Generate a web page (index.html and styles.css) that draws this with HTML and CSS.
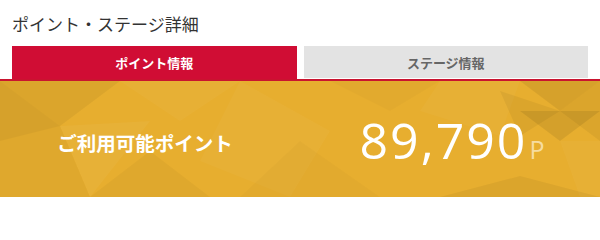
FILE: index.html
```html
<!DOCTYPE html>
<html lang="ja">
<head>
<meta charset="utf-8">
<link rel="stylesheet" href="styles.css">
</head>
<body>
<h1 class="title">ポイント・ステージ詳細</h1>
<div class="tabs">
  <div class="tab tab-active">ポイント情報</div>
  <div class="tab tab-idle">ステージ情報</div>
</div>
<section class="band">
  <svg class="band-bg" viewBox="0 0 600 116" preserveAspectRatio="none" aria-hidden="true">
    <polygon points="0,0 120,0 60,45" fill="#000" opacity="0.05"/>
    <polygon points="0,0 60,45 0,60" fill="#000" opacity="0.07"/>
    <polygon points="0,60 60,45 90,116 0,116" fill="#000" opacity="0.03"/>
    <polygon points="60,45 150,40 90,116" fill="#fff" opacity="0.04"/>
    <polygon points="120,0 240,0 180,40" fill="#fff" opacity="0.03"/>
    <polygon points="90,116 150,70 210,116" fill="#000" opacity="0.03"/>
    <polygon points="240,0 330,50 290,116 200,80" fill="#fff" opacity="0.03"/>
    <polygon points="330,0 440,0 390,30" fill="#000" opacity="0.02"/>
    <polygon points="440,0 520,0 500,55 420,30" fill="#fff" opacity="0.03"/>
    <polygon points="520,0 600,0 560,30" fill="#000" opacity="0.07"/>
    <polygon points="500,10 560,30 520,55" fill="#000" opacity="0.05"/>
    <polygon points="600,0 600,60 560,30" fill="#000" opacity="0.05"/>
    <polygon points="520,30 600,30 560,60" fill="#000" opacity="0.08"/>
    <polygon points="560,60 600,60 600,116 580,116" fill="#fff" opacity="0.03"/>
    <polygon points="440,116 520,95 600,116" fill="#000" opacity="0.05"/>
    <polygon points="300,60 380,116 240,116" fill="#000" opacity="0.02"/>
  </svg>
  <div class="band-label">ご利用可能ポイント</div>
  <div class="band-value"><span class="num">89,790</span><span class="unit">P</span></div>
</section>
</body>
</html>
```

FILE: styles.css
```css
* { box-sizing: border-box; }
html, body { margin: 0; padding: 0; background: #fff; }
body {
  width: 600px;
  font-family: "Noto Sans CJK JP", "Noto Sans", sans-serif;
  color: #333;
}
.title {
  margin: 0;
  padding: 12px 12px 0;
  height: 46px;
  font-size: 17px;
  line-height: 24px;
  font-weight: 400;
  color: #333;
}
.tabs {
  display: flex;
  align-items: flex-start;
  gap: 7px;
  padding: 0 12px;
  border-bottom: 2px solid #c9142f;
}
.tab {
  flex: 1;
  display: flex;
  align-items: center;
  justify-content: center;
  font-size: 13px;
  font-weight: 700;
}
.tab-active {
  height: 33px;
  background: #d00d34;
  color: #fff;
}
.tab-idle {
  height: 32px;
  background: #e3e3e3;
  color: #666;
}
.band {
  position: relative;
  height: 116px;
  background: #e7ae2f;
  display: grid;
  grid-template-columns: 1fr 1fr;
  align-items: center;
  overflow: hidden;
}
.band-bg {
  position: absolute;
  inset: 0;
  width: 100%;
  height: 100%;
}
.band-label {
  position: relative;
  text-align: center;
  padding-right: 10px;
  padding-top: 6px;
  color: #fff;
  font-size: 19.5px;
  font-weight: 700;
}
.band-value {
  position: relative;
  display: flex;
  align-items: baseline;
  justify-content: center;
  padding-left: 4px;
  padding-top: 2px;
  color: #fff;
  font-family: "Open Sans", "Noto Sans", sans-serif;
}
.num {
  font-size: 50px;
  font-weight: 400;
  letter-spacing: 2px;
  line-height: 1;
}
.unit {
  font-size: 25px;
  color: #f6dca0;
  margin-left: 2px;
  line-height: 1;
}
```
